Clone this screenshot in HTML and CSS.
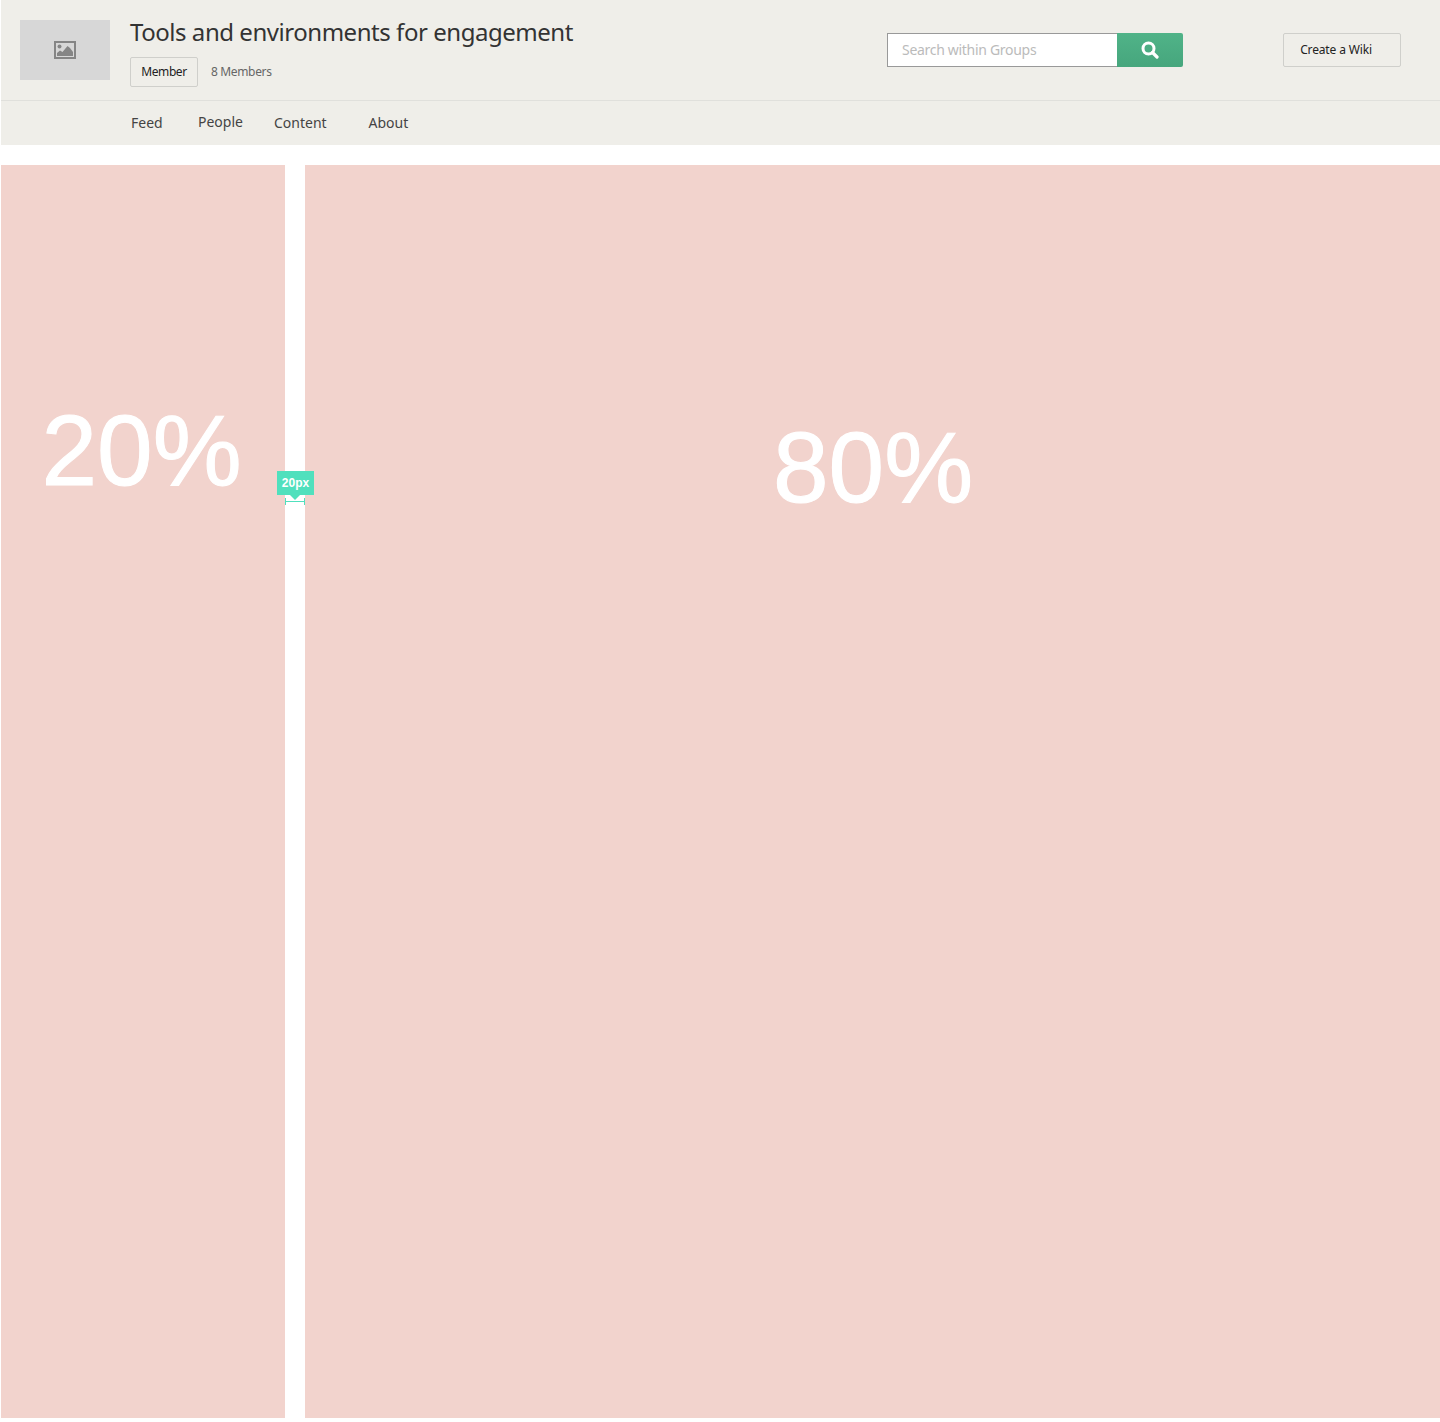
FILE: index.html
```html
<!doctype html>
<html lang="en">
<head>
  <meta charset="UTF-8">
  <title>Tools and environments for engagement</title>
  <link rel="stylesheet" href="styles.css">
</head>
<body>
  <div class="header">
    <div class="top">
      <div class="thumb">
        <svg width="22" height="18" viewBox="0 0 22 18">
          <rect x="1" y="1" width="20" height="16" fill="none" stroke="#858585" stroke-width="2"/>
          <circle cx="5.500" cy="5.500" r="2" fill="#858585"/>
          <path d="M3 15V12L6 9.500L8.500 11L13.500 5L16 7L19 11V15Z" fill="#858585"/>
        </svg>
      </div>
      <div class="info">
        <h1>Tools and environments for engagement</h1>
        <div class="meta">
          <a class="btn member">Member</a>
          <span class="count">8 Members</span>
        </div>
      </div>
      <div class="search">
        <div class="search-input">Search within Groups</div>
        <div class="search-btn">
          <svg width="18" height="18" viewBox="0 0 18 18">
            <circle cx="7.500" cy="7.500" r="5.500" fill="none" stroke="#fff" stroke-width="3"/>
            <path d="M11.500 11.500L16 16" stroke="#fff" stroke-width="3.200" stroke-linecap="round"/>
          </svg>
        </div>
      </div>
      <a class="btn create">Create a Wiki</a>
    </div>
    <ul class="nav">
      <li class="nav-feed">Feed</li>
      <li class="nav-people">People</li>
      <li class="nav-content">Content</li>
      <li>About</li>
    </ul>
  </div>
  <div class="columns">
    <div class="col col-left">20%</div>
    <div class="gutter">
      <div class="measure">
        <div class="tip">20px</div>
        <div class="rule"></div>
      </div>
    </div>
    <div class="col col-right">80%</div>
  </div>
</body>
</html>
```

FILE: styles.css
```css
*{margin:0;
  padding:0;
  box-sizing:border-box;
  list-style:none;}
body{background:#fff;
     padding-left:1px;
     height:1422px;
     overflow:hidden;
     font-family:"Noto Sans","Open Sans",sans-serif;
     color:#333;}
.header{height:145px;
        background:#efeee9;}
.top{height:101px;
     display:flex;
     border-bottom:1px solid #e0e0dc;
     padding:20px 0 0 19px;}
.thumb{width:90px;
       height:60px;
       background:#d7d7d7;
       display:flex;
       align-items:center;
       justify-content:center;}
.info{width:757px;
      margin-left:20px;}
.info h1{font-size:24px;
         font-weight:400;
         line-height:26px;
         margin-top:-1px;
         color:#333;
         letter-spacing:-.46px;}
.meta{display:flex;
      align-items:center;
      margin-top:12px;}
.btn{display:flex;
     align-items:center;
     justify-content:center;
     border:1px solid #cfcfcb;
     border-radius:2px;
     font-size:12px;
     color:#222;
     padding-bottom:2px;}
.member{width:68px;
        height:30px;
        letter-spacing:-.4px;}
.count{font-size:12px;
       color:#666;
       margin-left:13px;
       padding-bottom:2px;
       letter-spacing:-.35px;}
.search{display:flex;
        width:296px;
        height:34px;
        margin-top:13px;}
.search-input{width:230px;
              background:#fff;
              border:1px solid #999;
              border-right:0;
              font-size:14px;
              line-height:32px;
              padding-left:14px;
              color:#bbb;
              letter-spacing:-.3px;}
.search-btn{width:66px;
            background:linear-gradient(#50b388,#46a67d);
            border-radius:0 2px 2px 0;
            display:flex;
            align-items:center;
            justify-content:center;}
.create{width:118px;
        height:34px;
        margin:13px 0 0 100px;
        padding-right:12px;
        letter-spacing:-.15px;}
.nav{display:flex;
     padding:12px 0 0 130px;
     font-size:14px;
     line-height:20px;
     color:#444;}
.nav-feed{width:67px;}
.nav-people{width:76px;
            margin-top:-1px;}
.nav-content{width:94.5px;}
.columns{display:flex;
         margin-top:20px;
         height:1253px;
         color:#fff;
         font-family:"Liberation Sans",Arial,sans-serif;
         font-size:100px;
         line-height:116px;
         text-align:center;
         -webkit-text-stroke:1px #fff;}
.col{background:#f2d3cd;}
.col-left{width:284px;
          padding:227px 3px 0 0;}
.col-right{width:1135px;
           padding:244px 0 0 1px;}
.gutter{width:20px;
        position:relative;}
.measure{position:absolute;
         left:0;
         top:306px;
         width:20px;}
.tip{position:absolute;
     left:-8px;
     top:0;
     width:37px;
     height:24px;
     background:#50e0bd;
     font-size:12px;
     font-weight:700;
     line-height:24px;
     -webkit-text-stroke:0;}
.tip:after{content:"";
           position:absolute;
           left:13px;
           top:24px;
           border:5px solid transparent;
           border-top-color:#50e0bd;
           border-bottom:0;}
.rule{position:absolute;
      top:27px;
      left:0;
      width:20px;
      height:7px;
      border-left:1px solid #50e0bd;
      border-right:1px solid #50e0bd;
      background:linear-gradient(#50e0bd,#50e0bd) 0 3px/100% 1px no-repeat;}
```
